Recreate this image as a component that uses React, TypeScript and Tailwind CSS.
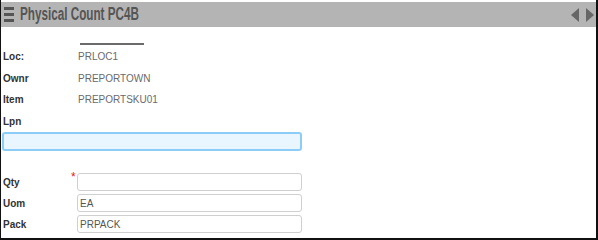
import React from "react";

function Row({ label, value }: { label: string; value?: string }) {
  return (
    <div className="flex items-center h-[21.5px]">
      <span className="w-[76px] pl-[1px] font-bold text-[#333] text-[10px]">{label}</span>
      <span className="text-[10px] text-[#6a6a6a]">{value}</span>
    </div>
  );
}

function Field({ label, value, required }: { label: string; value?: string; required?: boolean }) {
  return (
    <div className="flex items-center h-[18px]">
      <span className="w-[69px] pl-[1px] font-bold text-[#333] text-[10px]">{label}</span>
      <span className="w-[6px] self-start text-[#e02020] text-[12px] leading-[10px] -mt-[1px]">{required ? "*" : ""}</span>
      <div className="w-[225px] h-[18px] border-[1.5px] border-[#cfcfcf] rounded-[3px] flex items-center pl-[2px] text-[10px] text-[#555]">
        {value}
      </div>
    </div>
  );
}

export default function App() {
  return (
    <div className="w-[598px] h-[240px] bg-white border-l border-r-2 border-b-2 border-[#111] font-['Liberation_Sans',Arial,sans-serif] overflow-hidden">
      <div className="mt-[2px] h-[25px] bg-[#b4b4b4] flex items-center pl-[3px] pr-[2px]">
        <svg width="10" height="15" viewBox="0 0 10 15" className="text-[#555]">
          <rect x="0" y="0" width="10" height="3" fill="currentColor" />
          <rect x="0" y="6" width="10" height="3" fill="currentColor" />
          <rect x="0" y="12" width="10" height="3" fill="currentColor" />
        </svg>
        <span className="ml-[6px] text-[18px] font-bold text-[#555] inline-block scale-x-[0.65] origin-left whitespace-nowrap">
          Physical Count PC4B
        </span>
        <div className="ml-auto flex items-center gap-[7px]">
          <svg width="8" height="14" viewBox="0 0 8 14">
            <polygon points="8,0 0,7 8,14" fill="#666" />
          </svg>
          <svg width="8" height="14" viewBox="0 0 8 14">
            <polygon points="0,0 8,7 0,14" fill="#666" />
          </svg>
        </div>
      </div>
      <div className="pl-[1px]">
        <div className="ml-[78px] mt-[16px] w-[64px] h-[2px] bg-[#6b6b6b]" />
        <div className="mt-[1px]">
          <Row label="Loc:" value="PRLOC1" />
          <Row label="Ownr" value="PREPORTOWN" />
          <Row label="Item" value="PREPORTSKU01" />
          <Row label="Lpn" />
        </div>
        <div className="w-[300px] h-[19px] border-2 border-[#8ccdf7] bg-[#eaf6ff] rounded-[3px]" />
        <div className="mt-[22px] flex flex-col gap-[3px]">
          <Field label="Qty" required />
          <Field label="Uom" value="EA" />
          <Field label="Pack" value="PRPACK" />
        </div>
      </div>
    </div>
  );
}
